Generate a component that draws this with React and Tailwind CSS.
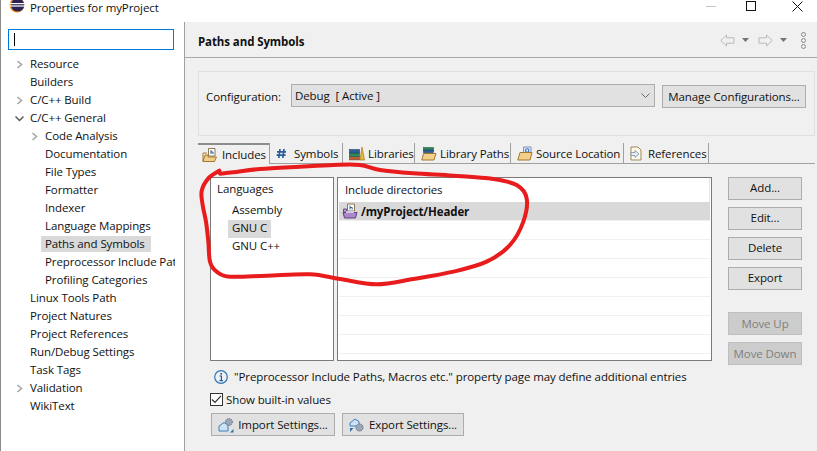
import React from 'react';

const treeItems = [
  { label: 'Resource', level: 0, arrow: 'right' },
  { label: 'Builders', level: 0 },
  { label: 'C/C++ Build', level: 0, arrow: 'right' },
  { label: 'C/C++ General', level: 0, arrow: 'down' },
  { label: 'Code Analysis', level: 1, arrow: 'right' },
  { label: 'Documentation', level: 1 },
  { label: 'File Types', level: 1 },
  { label: 'Formatter', level: 1 },
  { label: 'Indexer', level: 1 },
  { label: 'Language Mappings', level: 1 },
  { label: 'Paths and Symbols', level: 1, selected: true },
  { label: 'Preprocessor Include Paths, Macros etc.', level: 1 },
  { label: 'Profiling Categories', level: 1 },
  { label: 'Linux Tools Path', level: 0 },
  { label: 'Project Natures', level: 0 },
  { label: 'Project References', level: 0 },
  { label: 'Run/Debug Settings', level: 0 },
  { label: 'Task Tags', level: 0 },
  { label: 'Validation', level: 0, arrow: 'right' },
  { label: 'WikiText', level: 0 },
];

// hand drawn circle, points in 3x coordinates
const circlePoints = [
  [58, 47], [25, 70], [5, 108], [8, 150], [18, 200], [25, 260], [30, 320], [50, 350], [90, 365],
  [200, 362], [330, 358], [420, 372], [530, 388], [640, 372], [760, 350], [860, 320], [930, 270],
  [970, 200], [980, 130], [950, 90], [880, 72], [760, 62], [640, 55], [540, 45], [480, 30],
  [400, 30], [300, 35], [180, 42], [100, 52], [60, 56],
];

const smoothPath = (pts) => {
  let d = `M${pts[0][0]} ${pts[0][1]}`;
  for (let i = 0; i < pts.length - 1; i++) {
    const p0 = pts[i - 1] || pts[i];
    const p1 = pts[i];
    const p2 = pts[i + 1];
    const p3 = pts[i + 2] || p2;
    const c1 = [p1[0] + (p2[0] - p0[0]) / 6, p1[1] + (p2[1] - p0[1]) / 6];
    const c2 = [p2[0] - (p3[0] - p1[0]) / 6, p2[1] - (p3[1] - p1[1]) / 6];
    d += ` C${c1[0]} ${c1[1]} ${c2[0]} ${c2[1]} ${p2[0]} ${p2[1]}`;
  }
  return d;
};

const EclipseLogo = () => (
  <svg width="16" height="16" viewBox="0 0 16 16" className="-mt-[3px] shrink-0">
    <circle cx="8" cy="8" r="7.5" fill="#f7941e" />
    <circle cx="8.6" cy="8" r="6.6" fill="#2c2255" />
    <rect x="1" y="6" width="15" height="1.2" fill="#fff" />
    <rect x="1" y="8.4" width="15" height="1.2" fill="#fff" />
  </svg>
);

const Chevron = ({ dir }) => (
  <svg width="9" height="9" viewBox="0 0 9 9" fill="none">
    {dir === 'right' ? (
      <path d="M2.5 1 L6.5 4.5 L2.5 8" stroke="#a6a6a6" strokeWidth="1.6" />
    ) : (
      <path d="M0.5 2.5 L4.5 6.5 L8.5 2.5" stroke="#595959" strokeWidth="1.5" />
    )}
  </svg>
);

const IncludesIcon = () => (
  <svg width="16" height="16" viewBox="0 0 16 16">
    <path d="M6.5 1.5 H13 V9 H6.5 Z" fill="#fff" stroke="#8a7a50" />
    <path d="M9 3 V7 M9 5 H11 V7" stroke="#3b5a9a" strokeWidth="1" fill="none" />
    <path d="M1 14.5 L3 8 H6 V10 H14.5 L12.5 14.5 Z" fill="#f3cf8c" stroke="#a5772d" />
    <path d="M1 14.5 V6 H5" fill="none" stroke="#a5772d" />
  </svg>
);

const HashIcon = () => (
  <svg width="11" height="11" viewBox="0 0 11 11" fill="none">
    <path d="M4 1 L2.8 10 M8 1 L6.8 10 M1 3.8 H10 M0.6 7.2 H9.6" stroke="#2a5f9a" strokeWidth="1.7" />
  </svg>
);

const LibrariesIcon = () => (
  <svg width="16" height="15" viewBox="0 0 16 15">
    <rect x="0.5" y="10.5" width="10" height="3.4" fill="#b5603a" stroke="#7a3d22" strokeWidth="0.6" />
    <rect x="0.5" y="7" width="10" height="3.4" fill="#2f8a5c" stroke="#1f5f3e" strokeWidth="0.6" />
    <rect x="0.5" y="3.6" width="10" height="3.4" fill="#2d5f96" stroke="#1e4068" strokeWidth="0.6" />
    <path d="M11 14 L13 1 L15.5 14 Z" fill="#e8b93f" stroke="#a47c1c" strokeWidth="0.7" />
  </svg>
);

const LibraryPathsIcon = () => (
  <svg width="16" height="15" viewBox="0 0 16 15">
    <rect x="2.5" y="1.5" width="10" height="2.6" fill="#2f8a5c" stroke="#1f5f3e" strokeWidth="0.6" />
    <rect x="2.5" y="4" width="10" height="2.6" fill="#2d5f96" stroke="#1e4068" strokeWidth="0.6" />
    <path d="M0.8 14 L2.6 7.5 H15 L13 14 Z" fill="#f3cf8c" stroke="#a5772d" />
  </svg>
);

const SourceIcon = () => (
  <svg width="16" height="15" viewBox="0 0 16 15">
    <path d="M6.5 1 H14 V8 H6.5 Z" fill="#dfe9f7" stroke="#7b93b8" />
    <circle cx="10.2" cy="4.5" r="1.7" fill="none" stroke="#3b6fc0" strokeWidth="1.1" />
    <path d="M0.8 14 L3 6.5 H15 L13 14 Z" fill="#f3cf8c" stroke="#a5772d" />
  </svg>
);

const ReferencesIcon = () => (
  <svg width="12" height="15" viewBox="0 0 12 15">
    <path d="M1 1 H8 L11 4 V14 H1 Z" fill="#fbf8ee" stroke="#a08a50" />
    <path d="M1 6.5 H5 V4.5 L9 8 L5 11.5 V9.5 H1 Z" fill="#e6edf5" stroke="#7a8ca3" strokeWidth="0.8" />
  </svg>
);

const HeaderRowIcon = () => (
  <svg width="16" height="16" viewBox="0 0 16 16" className="shrink-0">
    <path d="M5.5 1 H12.5 V8 H5.5 Z" fill="#fff" stroke="#8a7a50" />
    <path d="M8 2.5 V6.5 M8 4.5 H10.2 V6.5" stroke="#3b5a9a" strokeWidth="1" fill="none" />
    <path d="M1.5 6 H4.5 V9 H1.5 Z" fill="#b9a0d0" stroke="#6a4a8a" />
    <path d="M1 9.5 H15 L13.5 15 H2.5 Z" fill="#a987c9" stroke="#5f3f82" />
    <rect x="4" y="8" width="8" height="2" fill="#d6c4e6" />
  </svg>
);

const ImportIcon = () => (
  <svg width="16" height="16" viewBox="0 0 16 16" className="shrink-0">
    <path d="M1 9 L6 5.5 L10 8 V14 H1 Z" fill="#cfe2f5" stroke="#3f7cb8" />
    <circle cx="11" cy="5" r="3.4" fill="#9aa7b5" stroke="#5d6b7a" strokeDasharray="1.2 1" />
    <path d="M12 15.5 H15.5 V12 Z" fill="#2f6fb0" />
  </svg>
);

const ExportIcon = () => (
  <svg width="16" height="16" viewBox="0 0 16 16" className="shrink-0">
    <path d="M1 6 L6 2 L10 4.5 V9 H1 Z" fill="#cfe2f5" stroke="#3f7cb8" />
    <circle cx="10.5" cy="10.5" r="3.6" fill="#9aa7b5" stroke="#5d6b7a" strokeDasharray="1.2 1" />
    <path d="M1 11 H4.5 L1 15 Z" fill="#2f6fb0" />
  </svg>
);

const Arrow = ({ flip }) => (
  <svg width="15" height="13" viewBox="0 0 15 13" fill="none" className={flip ? '-scale-x-100' : ''}>
    <path d="M0.8 6.5 L6.5 1 V3.8 H14 V9.2 H6.5 V12 Z" fill="#f0f0f0" stroke="#b8b8b8" />
  </svg>
);

const DropTri = () => (
  <svg width="7" height="4" viewBox="0 0 7 4">
    <path d="M0 0 H7 L3.5 4 Z" fill="#737373" />
  </svg>
);

const ActionButton = ({ children, disabled, className = '' }) => (
  <div
    className={`flex items-center justify-center whitespace-nowrap border ${
      disabled ? 'bg-[#cccccc] border-[#bfbfbf] text-[#7f7f7f]' : 'bg-[#e1e1e1] border-[#adadad] text-[#111]'
    } ${className}`}
  >
    {children}
  </div>
);

const Tab = ({ icon, label, width, gap, selected }) => (
  <div
    className={`flex items-center shrink-0 border-r border-[#a0a0a0] ${width} ${gap} ${
      selected ? 'border-t-2 border-t-[#8c8c8c] -mb-px bg-[#f0f0f0] pl-[4px]' : 'pl-[6px]'
    }`}
  >
    {icon}
    <span className="whitespace-nowrap mt-px">{label}</span>
  </div>
);

const App = () => {
  return (
    <div
      className="relative w-[817px] h-[451px] overflow-hidden bg-white text-[11.5px] leading-[16px] text-[#111] flex flex-col"
      style={{ fontFamily: '"Open Sans", "Noto Sans", sans-serif', letterSpacing: '-0.1px' }}
    >
      {/* title bar */}
      <div className="h-[22px] shrink-0 flex items-start border-l border-[#8c8c8c] pl-[8px]">
        <EclipseLogo />
        <span className="ml-[5px]">Properties for myProject</span>
        <div className="ml-auto flex items-start">
          <div className="w-[10px] h-px bg-[#c4c4c4] mt-[6px] mr-[30px]" />
          <div className="w-[10px] h-[10px] border border-[#111] mt-px mr-[36px]" />
          <svg width="11" height="11" viewBox="0 0 11 11" className="mt-px mr-[14px]">
            <path d="M0.5 0.5 L10.5 10.5 M10.5 0.5 L0.5 10.5" stroke="#111" />
          </svg>
        </div>
      </div>

      <div className="flex flex-1 min-h-0">
        {/* preference tree */}
        <div className="w-[185px] shrink-0 border-l border-r border-[#8c8c8c] border-r-[#a0a0a0] pl-[7px] pt-[7px]">
          <div className="w-[166px] h-[21px] border border-[#0078d7] flex items-center pl-[5px]">
            <div className="w-px h-[13px] bg-black" />
          </div>
          <div className="mt-[5px] w-[167px] overflow-hidden">
            {treeItems.map((item) => (
              <div key={item.label} className="h-[18px] flex items-center whitespace-nowrap">
                <div className={`shrink-0 flex justify-center ${item.level ? 'w-[37px] pl-[16px]' : 'w-[22px] pl-[1px]'}`}>
                  {item.arrow && <Chevron dir={item.arrow} />}
                </div>
                <span className={item.selected ? 'bg-[#d9d9d9] -ml-[4px] pl-[4px] pr-[6px]' : ''}>{item.label}</span>
              </div>
            ))}
          </div>
        </div>

        {/* page */}
        <div className="flex-1 min-w-0 bg-[#f0f0f0] flex flex-col">
          <div className="h-[36px] shrink-0 border-b border-[#a8a8a8] flex items-center pl-[13px] pr-[8px]">
            <span className="font-bold mt-[4px]">Paths and Symbols</span>
            <div className="ml-auto flex items-center mt-[1px]">
              <Arrow />
              <div className="ml-[7px]"><DropTri /></div>
              <div className="ml-[9px]"><Arrow flip /></div>
              <div className="ml-[7px]"><DropTri /></div>
              <div className="ml-[14px] flex flex-col gap-[1px] mr-[3px]">
                <div className="w-[5px] h-[5px] rounded-full border border-[#8a8a8a]" />
                <div className="w-[5px] h-[5px] rounded-full border border-[#8a8a8a]" />
                <div className="w-[5px] h-[5px] rounded-full border border-[#8a8a8a]" />
              </div>
            </div>
          </div>

          {/* configuration */}
          <div className="mt-[13px] ml-[13px] w-[617px] h-[65px] shrink-0 border border-[#e0e0e0] pl-[7px] pt-[12px] flex items-start">
            <span className="w-[85px] mt-[5px] shrink-0">Configuration:</span>
            <div className="w-[364px] h-[23px] shrink-0 bg-[#e1e1e1] border border-[#adadad] flex items-center pl-[3px] pr-[3px]">
              <span className="whitespace-pre">Debug  [ Active ]</span>
              <svg width="9" height="6" viewBox="0 0 9 6" fill="none" className="ml-auto mr-[1px]">
                <path d="M0.5 0.5 L4.5 4.5 L8.5 0.5" stroke="#6a6a6a" />
              </svg>
            </div>
            <ActionButton className="w-[144px] h-[23px] ml-[7px] mt-px shrink-0">Manage Configurations...</ActionButton>
          </div>

          {/* tabs */}
          <div className="mt-[7px] ml-[13px] w-[617px] h-[21px] shrink-0 flex border-b border-[#a0a0a0]">
            <Tab selected icon={<IncludesIcon />} label="Includes" width="w-[72px]" gap="gap-[4px]" />
            <Tab icon={<HashIcon />} label="Symbols" width="w-[73px]" gap="gap-[7px]" />
            <Tab icon={<LibrariesIcon />} label="Libraries" width="w-[72px]" gap="gap-[3px]" />
            <Tab icon={<LibraryPathsIcon />} label="Library Paths" width="w-[96px]" gap="gap-[3px]" />
            <Tab icon={<SourceIcon />} label="Source Location" width="w-[113px]" gap="gap-[3px]" />
            <Tab icon={<ReferencesIcon />} label="References" width="w-[85px]" gap="gap-[6px]" />
          </div>

          {/* lists and buttons */}
          <div className="mt-[13px] ml-[25px] flex items-start shrink-0">
            <div className="w-[124px] h-[184px] bg-white border border-[#7a7a7a] flex flex-col">
              <div className="h-[24px] pl-[6px] pb-[2px] flex items-center">Languages</div>
              <div className="pl-[21px] flex flex-col items-start whitespace-nowrap">
                <div className="h-[18px] pb-[2px] flex items-center">Assembly</div>
                <div className="h-[18px] pb-[2px] flex items-center bg-[#d9d9d9] -ml-[4px] px-[4px] w-[43px]">GNU C</div>
                <div className="h-[18px] pb-[2px] flex items-center">GNU C++</div>
              </div>
            </div>
            <div className="ml-[3px] w-[375px] h-[184px] bg-white border border-[#7a7a7a] pl-px pr-px overflow-hidden">
              <div className="h-[24px] pl-[6px] flex items-center border-r border-[#e8e8e8]">Include directories</div>
              <div className="h-[19px] bg-[#d9d9d9] pl-[3px] flex items-center gap-[3px] font-bold border-b border-[#f0f0f0]">
                <HeaderRowIcon />
                <span className="mt-px">/myProject/Header</span>
              </div>
              {[1, 2, 3, 4, 5, 6, 7].map((n) => (
                <div key={n} className="h-[19px] border-b border-[#f0f0f0]" />
              ))}
            </div>
            <div className="ml-[16px] w-[74px] flex flex-col shrink-0">
              <ActionButton className="h-[23px] pb-[2px]">Add...</ActionButton>
              <ActionButton className="h-[23px] mt-[7px] pb-[2px]">Edit...</ActionButton>
              <ActionButton className="h-[23px] mt-[7px] pb-[2px]">Delete</ActionButton>
              <ActionButton className="h-[23px] mt-[7px] pb-[2px]">Export</ActionButton>
              <ActionButton disabled className="h-[23px] mt-[22px]">Move Up</ActionButton>
              <ActionButton disabled className="h-[23px] mt-[7px]">Move Down</ActionButton>
            </div>
          </div>

          {/* info */}
          <div className="mt-[3px] ml-[29px] h-[17px] flex items-center shrink-0">
            <svg width="14" height="14" viewBox="0 0 14 14" fill="none">
              <circle cx="7" cy="7" r="6.3" stroke="#2f77bc" strokeWidth="1.2" />
              <path d="M5.5 6 H7.4 V10.4 M5.5 10.6 H9" stroke="#1d5f9f" strokeWidth="1.2" />
              <rect x="6.4" y="3" width="1.6" height="1.6" fill="#1d5f9f" />
            </svg>
            <span className="ml-[6px] whitespace-nowrap">"Preprocessor Include Paths, Macros etc." property page may define additional entries</span>
          </div>
          <div className="mt-[7px] ml-[25px] h-[15px] flex items-center shrink-0">
            <div className="w-[13px] h-[13px] border border-[#333] bg-white flex items-center justify-center">
              <svg width="11" height="11" viewBox="0 0 11 11" fill="none">
                <path d="M1 5.5 L4 8.5 L10 1.8" stroke="#333" strokeWidth="1.2" />
              </svg>
            </div>
            <span className="ml-[3px]">Show built-in values</span>
          </div>
          <div className="mt-[6px] ml-[26px] flex gap-[7px] shrink-0">
            <ActionButton className="w-[124px] h-[23px] gap-[4px]">
              <ImportIcon />
              <span>Import Settings...</span>
            </ActionButton>
            <ActionButton className="w-[122px] h-[23px] gap-[4px]">
              <ExportIcon />
              <span>Export Settings...</span>
            </ActionButton>
          </div>
        </div>
      </div>

      {/* red marker circle drawn over the screenshot */}
      <svg
        width="340"
        height="135"
        viewBox="0 0 1020 405"
        fill="none"
        className="absolute left-[200px] top-[155px] overflow-visible pointer-events-none"
      >
        <path d={smoothPath(circlePoints)} stroke="#e81c1c" strokeWidth="12" strokeLinecap="round" strokeLinejoin="round" />
      </svg>
    </div>
  );
};

export default App;
